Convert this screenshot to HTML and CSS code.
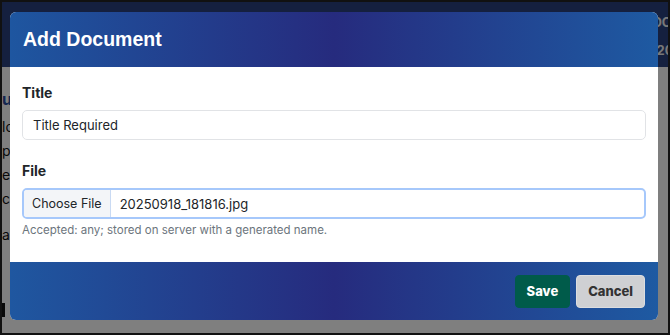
FILE: index.html
```html
<!DOCTYPE html>
<html lang="en">
<head>
    <meta charset="UTF-8">
    <meta name="viewport" content="width=device-width, initial-scale=1.0">
    <title>Add Document</title>
    <link rel="stylesheet" href="styles.css">
</head>
<body>
    <div class="screen">
        <!-- halaman di belakang modal -->
        <div class="page">
            <div class="topbar">
                <span class="topbar-text">DOCS</span>
                <span class="topbar-text">2025</span>
            </div>
            <div class="page-content">
                <h3 class="page-heading">updates</h3>
                <p>loaded</p>
                <p>pending</p>
                <p>estimates</p>
                <p>contracts</p>
                <p class="gap">archive</p>
                <div class="page-bar"></div>
            </div>
        </div>
        <div class="overlay"></div>

        <div class="modal">
            <div class="modal-header">
                <h2>Add Document</h2>
            </div>
            <div class="modal-body">
                <div class="field">
                    <label class="field-label">Title</label>
                    <div class="text-input">Title Required</div>
                </div>
                <div class="field">
                    <label class="field-label">File</label>
                    <div class="file-input">
                        <span class="file-button">Choose File</span>
                        <span class="file-name">20250918_181816.jpg</span>
                    </div>
                    <div class="help-text">Accepted: any; stored on server with a generated name.</div>
                </div>
            </div>
            <div class="modal-footer">
                <button class="btn btn-save" type="button">Save</button>
                <button class="btn btn-cancel" type="button">Cancel</button>
            </div>
        </div>
    </div>
</body>
</html>
```

FILE: styles.css
```css
body {
    margin: 0;
    padding: 0;
    font-family: Inter, "Noto Sans", Arial, sans-serif;
    background: #111;
}
.screen {
    position: relative;
    width: 670px;
    height: 335px;
    box-sizing: border-box;
    border: 2px solid #111;
    overflow: hidden;
    background: #fff;
}
.page {
    height: 100%;
    background: #fff;
}
.topbar {
    height: 65px;
    background: #2a407e;
    display: flex;
    flex-direction: column;
    align-items: flex-end;
    padding: 6px 0 0;
    box-sizing: border-box;
    margin-right: -22px;
}
.topbar-text {
    color: #f0f0f0;
    font-weight: 700;
    font-size: 13px;
    line-height: 28px;
}
.page-content {
    width: 8px;
    overflow: hidden;
    padding: 14px 0 0 0;
    font-size: 14px;
    color: #111;
}
.page-heading {
    margin: 8px 0 6px;
    color: #2a4ca0;
    font-size: 16px;
}
.page-content p {
    margin: 0;
    line-height: 24px;
}
.page-content p.gap {
    margin-top: 12px;
}
.page-bar {
    margin: 56px 0 0 0;
    width: 5px;
    height: 14px;
    border-left: 3px solid #111;
}
.overlay {
    position: absolute;
    inset: 0;
    background: rgba(0, 0, 0, 0.5);
}
.modal {
    position: absolute;
    left: 8px;
    top: 10px;
    width: 648px;
    height: 308px;
    border-radius: 6px;
    overflow: hidden;
    display: flex;
    flex-direction: column;
    background: #fff;
}
.modal-header {
    height: 55px;
    padding: 0 13px;
    display: flex;
    align-items: center;
    background: linear-gradient(90deg, #1e56a0 0%, #262b7e 50%, #1e5aa2 100%);
}
.modal-header h2 {
    margin: 0;
    color: #fff;
    font-family: "Liberation Sans", Arial, sans-serif;
    font-size: 19.5px;
    font-weight: 700;
}
.modal-body {
    flex: 1;
    padding: 16px 12px 0;
}
.field {
    margin-bottom: 21px;
}
.field-label {
    display: block;
    font-size: 14px;
    font-weight: 700;
    color: #212529;
    line-height: 20px;
    margin-bottom: 7px;
}
.text-input {
    height: 30px;
    box-sizing: border-box;
    border: 1px solid #e1e3e6;
    border-radius: 5px;
    padding: 0 10px;
    display: flex;
    align-items: center;
    font-size: 13px;
    color: #212529;
}
.file-input {
    height: 31px;
    box-sizing: border-box;
    border: 2px solid #a6c8fb;
    border-radius: 5px;
    display: flex;
    align-items: stretch;
    font-size: 13px;
    color: #212529;
    overflow: hidden;
}
.file-button {
    display: flex;
    align-items: center;
    padding: 0 8px;
    font-size: 12.5px;
    background: #f3f5f8;
    border-right: 1px solid #c9daf3;
}
.file-name {
    display: flex;
    align-items: center;
    padding: 0 9px;
}
.help-text {
    margin-top: 4px;
    font-size: 11.5px;
    color: #6c757d;
}
.modal-footer {
    height: 58px;
    padding: 0 13px;
    display: flex;
    align-items: center;
    justify-content: flex-end;
    gap: 6px;
    background: linear-gradient(90deg, #1f57a0 0%, #262b7e 50%, #1e5aa2 100%);
}
.btn {
    height: 33px;
    border-radius: 4px;
    font-family: Inter, "Noto Sans", Arial, sans-serif;
    font-size: 13px;
    font-weight: 800;
    cursor: pointer;
    padding: 0 11px;
}
.btn-save {
    background: #005b4a;
    color: #fff;
    border: 1px solid #005b4a;
}
.btn-cancel {
    background: #cfd0d3;
    color: #333;
    border: 1px solid #dcdde0;
}
```
